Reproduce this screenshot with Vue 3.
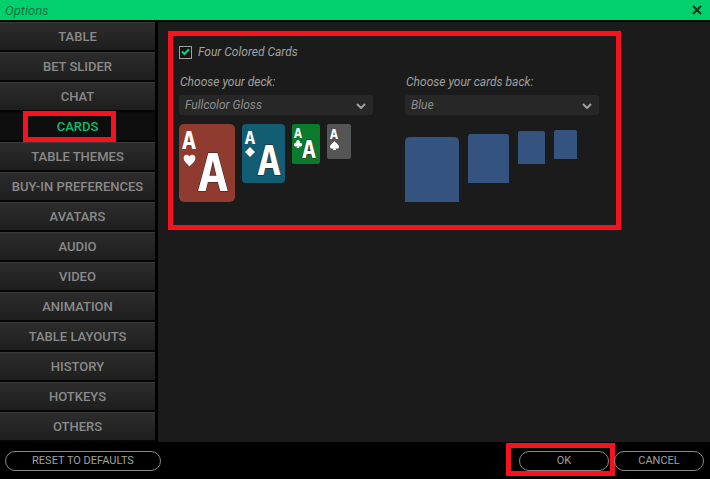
<script setup>
import { ref } from 'vue'

const sections = [
  'TABLE', 'BET SLIDER', 'CHAT', 'CARDS', 'TABLE THEMES', 'BUY-IN PREFERENCES', 'AVATARS',
  'AUDIO', 'VIDEO', 'ANIMATION', 'TABLE LAYOUTS', 'HISTORY', 'HOTKEYS', 'OTHERS',
]
const active = ref('CARDS')
const fourColored = ref(true)
const deck = ref('Fullcolor Gloss')
const back = ref('Blue')

const suits = {
  heart: 'M10 19C8 16 1 12 1 6C1 0 8 0 10 4C12 0 19 0 19 6C19 12 12 16 10 19Z',
  diamond: 'M10 0L20 10L10 20L0 10Z',
  club: 'M10 0A4.6 4.6 0 0 1 13 8A4.6 4.6 0 1 1 11.5 14L13.5 20H6.5L8.5 14A4.6 4.6 0 1 1 7 8A4.6 4.6 0 0 1 10 0Z',
  spade: 'M10 0C12 4 20 8 20 13C20 18 13 18 11.5 15L13.5 20H6.5L8.5 15C7 18 0 18 0 13C0 8 8 4 10 0Z',
}

const faces = [
  { suit: 'heart', color: '#8f3b2f', w: 56, h: 78, r: 5, small: { x: 10, y: 25, s: 24 }, pip: { x: 4, y: 30, s: 13 }, big: { x: 34, y: 67, s: 52 } },
  { suit: 'diamond', color: '#125c74', w: 43, h: 59, r: 4, small: { x: 8, y: 20, s: 18 }, pip: { x: 3, y: 23, s: 10 }, big: { x: 27, y: 51, s: 40 } },
  { suit: 'club', color: '#0a7a2b', w: 28, h: 40, r: 2, small: { x: 6, y: 14, s: 14 }, pip: { x: 2, y: 16, s: 8 }, big: { x: 17, y: 34, s: 24 } },
  { suit: 'spade', color: '#555555', w: 24, h: 35, r: 2, small: { x: 7, y: 15, s: 14 }, pip: { x: 3, y: 17, s: 9 } },
]

const backs = [
  { w: 54, h: 65, r: 5 },
  { w: 41, h: 49, r: 3 },
  { w: 27, h: 33, r: 2 },
  { w: 23, h: 29, r: 2 },
]
</script>

<template>
  <div class="window">
    <header class="titlebar">
      <h1>Options</h1>
      <button class="close" type="button" aria-label="Close">
        <svg width="10" height="10" viewBox="0 0 10 10"><path d="M1 1L9 9M9 1L1 9" /></svg>
      </button>
    </header>

    <div class="body">
      <nav class="sidebar">
        <button
          v-for="name in sections"
          :key="name"
          type="button"
          class="section"
          :class="{ active: name === active }"
          @click="active = name"
        >
          {{ name }}
        </button>
      </nav>

      <main class="content">
        <section class="panel">
          <label class="check">
            <input v-model="fourColored" type="checkbox" />
            <svg v-if="fourColored" class="tick" width="9" height="8" viewBox="0 0 9 8"><path d="M1 3.5L3.5 6L8 1.2" /></svg>
            <span>Four Colored Cards</span>
          </label>

          <div class="columns">
            <div class="column">
              <label for="deck">Choose your deck:</label>
              <div class="dropdown">
                <select id="deck" v-model="deck"><option>Fullcolor Gloss</option></select>
                <svg class="chevron" width="10" height="6" viewBox="0 0 10 6"><path d="M1 1L5 5L9 1" /></svg>
              </div>
              <div class="faces">
                <svg v-for="c in faces" :key="c.suit" :width="c.w" :height="c.h" :viewBox="`0 0 ${c.w} ${c.h}`">
                  <rect :width="c.w" :height="c.h" :rx="c.r" :fill="c.color" />
                  <text class="rank" :x="c.small.x" :y="c.small.y" :font-size="c.small.s">A</text>
                  <svg :x="c.pip.x" :y="c.pip.y" :width="c.pip.s" :height="c.pip.s" viewBox="0 0 20 20">
                    <path :d="suits[c.suit]" fill="#fff" />
                  </svg>
                  <text v-if="c.big" class="rank large" :x="c.big.x" :y="c.big.y" :font-size="c.big.s">A</text>
                </svg>
              </div>
            </div>

            <div class="column">
              <label for="back">Choose your cards back:</label>
              <div class="dropdown">
                <select id="back" v-model="back"><option>Blue</option></select>
                <svg class="chevron" width="10" height="6" viewBox="0 0 10 6"><path d="M1 1L5 5L9 1" /></svg>
              </div>
              <div class="backs">
                <svg v-for="b in backs" :key="b.w" :width="b.w" :height="b.h" :viewBox="`0 0 ${b.w} ${b.h}`">
                  <path
                    :d="`M0 ${b.h}V${b.r}Q0 0 ${b.r} 0H${b.w - b.r}Q${b.w} 0 ${b.w} ${b.r}V${b.h}Z`"
                    fill="#34547f"
                  />
                </svg>
              </div>
            </div>
          </div>
        </section>
      </main>
    </div>

    <footer class="footer">
      <button type="button" class="pill reset">RESET TO DEFAULTS</button>
      <button type="button" class="pill ok">OK</button>
      <button type="button" class="pill">CANCEL</button>
    </footer>
  </div>
</template>

<style>
body {
  margin: 0;
  background: #000;
}
</style>

<style scoped>
.window {
  display: flex;
  flex-direction: column;
  min-height: 100vh;
  background: #000;
  color: #a0a0a0;
  font-family: Roboto, "Liberation Sans", sans-serif;
  font-size: 12px;
}

.window *,
.window *::after {
  box-sizing: border-box;
}

button,
select {
  font: inherit;
  color: inherit;
}

.titlebar {
  display: flex;
  align-items: center;
  justify-content: space-between;
  height: 20px;
  padding: 0 8px 0 5px;
  background: #02cf6e;
}

h1 {
  margin: 0;
  color: #07753f;
  font-size: 13px;
  font-style: italic;
  font-weight: 400;
}

.close {
  display: flex;
  padding: 0;
  border: 0;
  background: none;
}

.close path {
  stroke: #06351c;
  stroke-width: 2;
}

.body {
  display: flex;
  flex: 1;
  padding-top: 2px;
}

.sidebar {
  display: flex;
  flex-direction: column;
  width: 155px;
  margin-right: 3px;
}

.section {
  position: relative;
  height: 30px;
  padding: 0;
  border: 0;
  border-top: 1px solid #3a3a3a;
  border-bottom: 2px solid #050505;
  background: linear-gradient(#2c2c2c, #1e1e1e);
  color: #8a8a8a;
  font-size: 13px;
  font-weight: 500;
  white-space: nowrap;
}

.section.active {
  border-top-color: #0b0b0b;
  background: #0e0e0e;
  color: #0cbd70;
}

.section.active::after {
  content: "";
  position: absolute;
  inset: -2px 39px -2px 23px;
  border: 5px solid #f5131f;
}

.content {
  flex: 1;
  padding: 9px 10px;
  background: #1b1b1b;
}

.panel {
  max-width: 453px;
  padding: 8px 17px 23px 6px;
  border: 5px solid #f5131f;
  font-style: italic;
}

.check {
  position: relative;
  display: flex;
  align-items: center;
  gap: 6px;
  height: 16px;
}

.check input {
  appearance: none;
  width: 13px;
  height: 13px;
  margin: 0;
  border: 1px solid #a0a0a0;
  background: #151515;
}

.tick {
  position: absolute;
  left: 2px;
  top: 4px;
}

.tick path {
  fill: none;
  stroke: #0ccf78;
  stroke-width: 2;
}

.columns {
  display: grid;
  grid-template-columns: 1fr 1fr;
  gap: 32px;
  padding-top: 14px;
}

.column > label {
  display: block;
  padding-left: 1px;
  line-height: 16px;
}

.dropdown {
  position: relative;
  margin-top: 5px;
}

.dropdown select {
  display: block;
  appearance: none;
  width: 100%;
  height: 20px;
  padding: 0 24px 0 6px;
  border: 0;
  border-radius: 3px;
  background: #272727;
  color: #8e8e8e;
  font-style: italic;
}

.chevron {
  position: absolute;
  right: 7px;
  top: 8px;
  pointer-events: none;
}

.chevron path {
  fill: none;
  stroke: #a0a0a0;
  stroke-width: 2;
}

.faces {
  display: flex;
  align-items: flex-start;
  gap: 7px;
  padding-top: 9px;
}

.rank {
  fill: #fff;
  font-family: "DejaVu Sans Mono", monospace;
  font-style: normal;
  font-weight: 700;
  text-anchor: middle;
}

.rank.large {
  stroke: #2a1d1a;
  stroke-width: 1px;
  paint-order: stroke;
}

.backs {
  display: flex;
  align-items: flex-start;
  gap: 9px;
  padding-top: 22px;
}

.backs svg:nth-child(2) {
  margin-top: -3px;
}

.backs svg:nth-child(3) {
  margin-top: -6px;
}

.backs svg:nth-child(4) {
  margin-top: -7px;
}

.footer {
  display: flex;
  align-items: center;
  gap: 5px;
  height: 37px;
  padding: 0 6px 0 5px;
}

.pill {
  position: relative;
  width: 90px;
  height: 20px;
  padding: 0;
  border: 1px solid #8a8a8a;
  border-radius: 10px;
  background: none;
  font-size: 11px;
}

.pill.reset {
  width: 156px;
  margin-right: auto;
}

.pill.ok::after {
  content: "";
  position: absolute;
  inset: -9px -7px -6px -14px;
  border: 5px solid #f5131f;
}
</style>
